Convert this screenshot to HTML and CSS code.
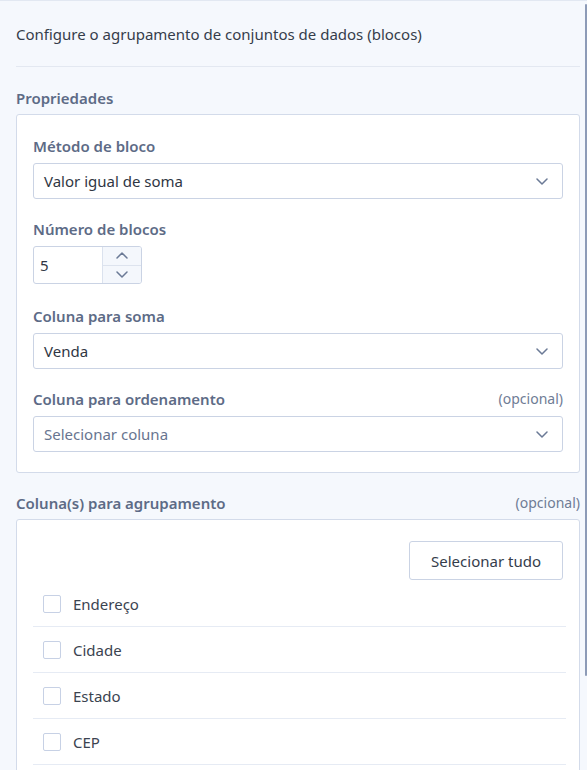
FILE: index.html
```html
<!DOCTYPE html>
<html lang="pt">
<head>
<meta charset="utf-8">
<title>Configurar blocos</title>
<link rel="stylesheet" href="styles.css">
</head>
<body>
<div class="panel">
  <div class="header">Configure o agrupamento de conjuntos de dados (blocos)</div>

  <div class="section-title">Propriedades</div>
  <div class="box props">
    <div class="field">
      <div class="label">Método de bloco</div>
      <div class="select">
        <span class="value">Valor igual de soma</span>
        <svg class="chev" width="12" height="7" viewBox="0 0 12 7"><path d="M1 1 L6 6 L11 1" fill="none" stroke="#6b7a96" stroke-width="1.5" stroke-linecap="round" stroke-linejoin="round"/></svg>
      </div>
    </div>
    <div class="field field-number">
      <div class="label">Número de blocos</div>
      <div class="number">
        <span class="num-value">5</span>
        <div class="spin">
          <div class="spin-btn"><svg width="12" height="7" viewBox="0 0 12 7"><path d="M1 6 L6 1 L11 6" fill="none" stroke="#6b7a96" stroke-width="1.5" stroke-linecap="round" stroke-linejoin="round"/></svg></div>
          <div class="spin-btn"><svg width="12" height="7" viewBox="0 0 12 7"><path d="M1 1 L6 6 L11 1" fill="none" stroke="#6b7a96" stroke-width="1.5" stroke-linecap="round" stroke-linejoin="round"/></svg></div>
        </div>
      </div>
    </div>
    <div class="field">
      <div class="label">Coluna para soma</div>
      <div class="select">
        <span class="value">Venda</span>
        <svg class="chev" width="12" height="7" viewBox="0 0 12 7"><path d="M1 1 L6 6 L11 1" fill="none" stroke="#6b7a96" stroke-width="1.5" stroke-linecap="round" stroke-linejoin="round"/></svg>
      </div>
    </div>
    <div class="field">
      <div class="label label-row"><span>Coluna para ordenamento</span><span class="optional">(opcional)</span></div>
      <div class="select">
        <span class="value placeholder">Selecionar coluna</span>
        <svg class="chev" width="12" height="7" viewBox="0 0 12 7"><path d="M1 1 L6 6 L11 1" fill="none" stroke="#6b7a96" stroke-width="1.5" stroke-linecap="round" stroke-linejoin="round"/></svg>
      </div>
    </div>
  </div>

  <div class="section-title label-row second"><span>Coluna(s) para agrupamento</span><span class="optional">(opcional)</span></div>
  <div class="box groups">
    <div class="actions"><button class="btn">Selecionar tudo</button></div>
    <ul class="list">
      <li class="row"><span class="check"></span><span>Endereço</span></li>
      <li class="row"><span class="check"></span><span>Cidade</span></li>
      <li class="row"><span class="check"></span><span>Estado</span></li>
      <li class="row"><span class="check"></span><span>CEP</span></li>
    </ul>
  </div>
</div>
<div class="scrollbar"></div>
</body>
</html>
```

FILE: styles.css
```css
html {
  height: 100%;
  overflow: hidden;
}
body {
  margin: 0;
  height: 770px;
  overflow: hidden;
  background: #f5f8fd;
  border-top: 1px solid #e2e8f2;
  font-family: "Noto Sans", "Open Sans", sans-serif;
  font-size: 15px;
  color: #333b48;
  position: relative;
  box-sizing: border-box;
}
.panel {
  padding: 0 7px 0 16px;
}
.header {
  height: 65px;
  display: flex;
  align-items: center;
  border-bottom: 1px solid #e3e8f1;
  color: #353d4b;
}
.section-title {
  margin-top: 20px;
  line-height: 22px;
  margin-bottom: 5px;
  font-weight: 600;
  color: #5d6b86;
}
.section-title.second {
  margin-top: 19px;
}
.box {
  background: #fff;
  border: 1px solid #d3dbea;
  border-radius: 3px;
}
.props {
  padding: 20px 16px 20px;
}
.field + .field {
  margin-top: 19px;
}
.field-number + .field {
  margin-top: 21px;
}
.label {
  line-height: 22px;
  margin-bottom: 6px;
  font-weight: 600;
  color: #5d6b86;
}
.label-row {
  display: flex;
  justify-content: space-between;
  align-items: center;
}
.optional {
  font-weight: 400;
  color: #6f7c95;
  font-size: 14px;
}
.select {
  height: 36px;
  box-sizing: border-box;
  border: 1px solid #cad3e4;
  border-radius: 3px;
  display: flex;
  align-items: center;
  justify-content: space-between;
  padding: 0 14px 0 10px;
  color: #2f3643;
}
.placeholder {
  color: #687590;
}
.number {
  width: 109px;
  height: 38px;
  box-sizing: border-box;
  border: 1px solid #cad3e4;
  border-radius: 3px;
  display: flex;
  overflow: hidden;
}
.num-value {
  flex: 1;
  display: flex;
  align-items: center;
  padding-left: 6px;
  color: #2f3643;
}
.spin {
  width: 38px;
  border-left: 1px solid #dbe2ee;
  background: #f4f7fc;
  display: flex;
  flex-direction: column;
}
.spin-btn {
  flex: 1;
  display: flex;
  align-items: center;
  justify-content: center;
}
.spin-btn + .spin-btn {
  border-top: 1px solid #dde3ee;
}
.groups {
  padding: 21px 16px 0;
  height: 400px;
}
.actions {
  display: flex;
  justify-content: flex-end;
}
.btn {
  font-family: inherit;
  font-size: 15px;
  color: #353d4b;
  background: #fff;
  border: 1px solid #cad3e4;
  border-radius: 3px;
  height: 39px;
  width: 154px;
  padding: 0;
}
.list {
  list-style: none;
  margin: 1px -3px 0 0;
  padding: 0;
}
.row {
  height: 45px;
  border-bottom: 1px solid #e6ebf4;
  display: flex;
  align-items: center;
  padding-left: 10px;
  color: #3b4350;
}
.check {
  width: 18px;
  height: 18px;
  box-sizing: border-box;
  border: 1px solid #c7d1e5;
  border-radius: 2px;
  margin-right: 12px;
}
.scrollbar {
  position: absolute;
  top: 3px;
  right: 0;
  width: 2px;
  height: 672px;
  background: #8d9bb7;
  border-radius: 1px;
}
```
